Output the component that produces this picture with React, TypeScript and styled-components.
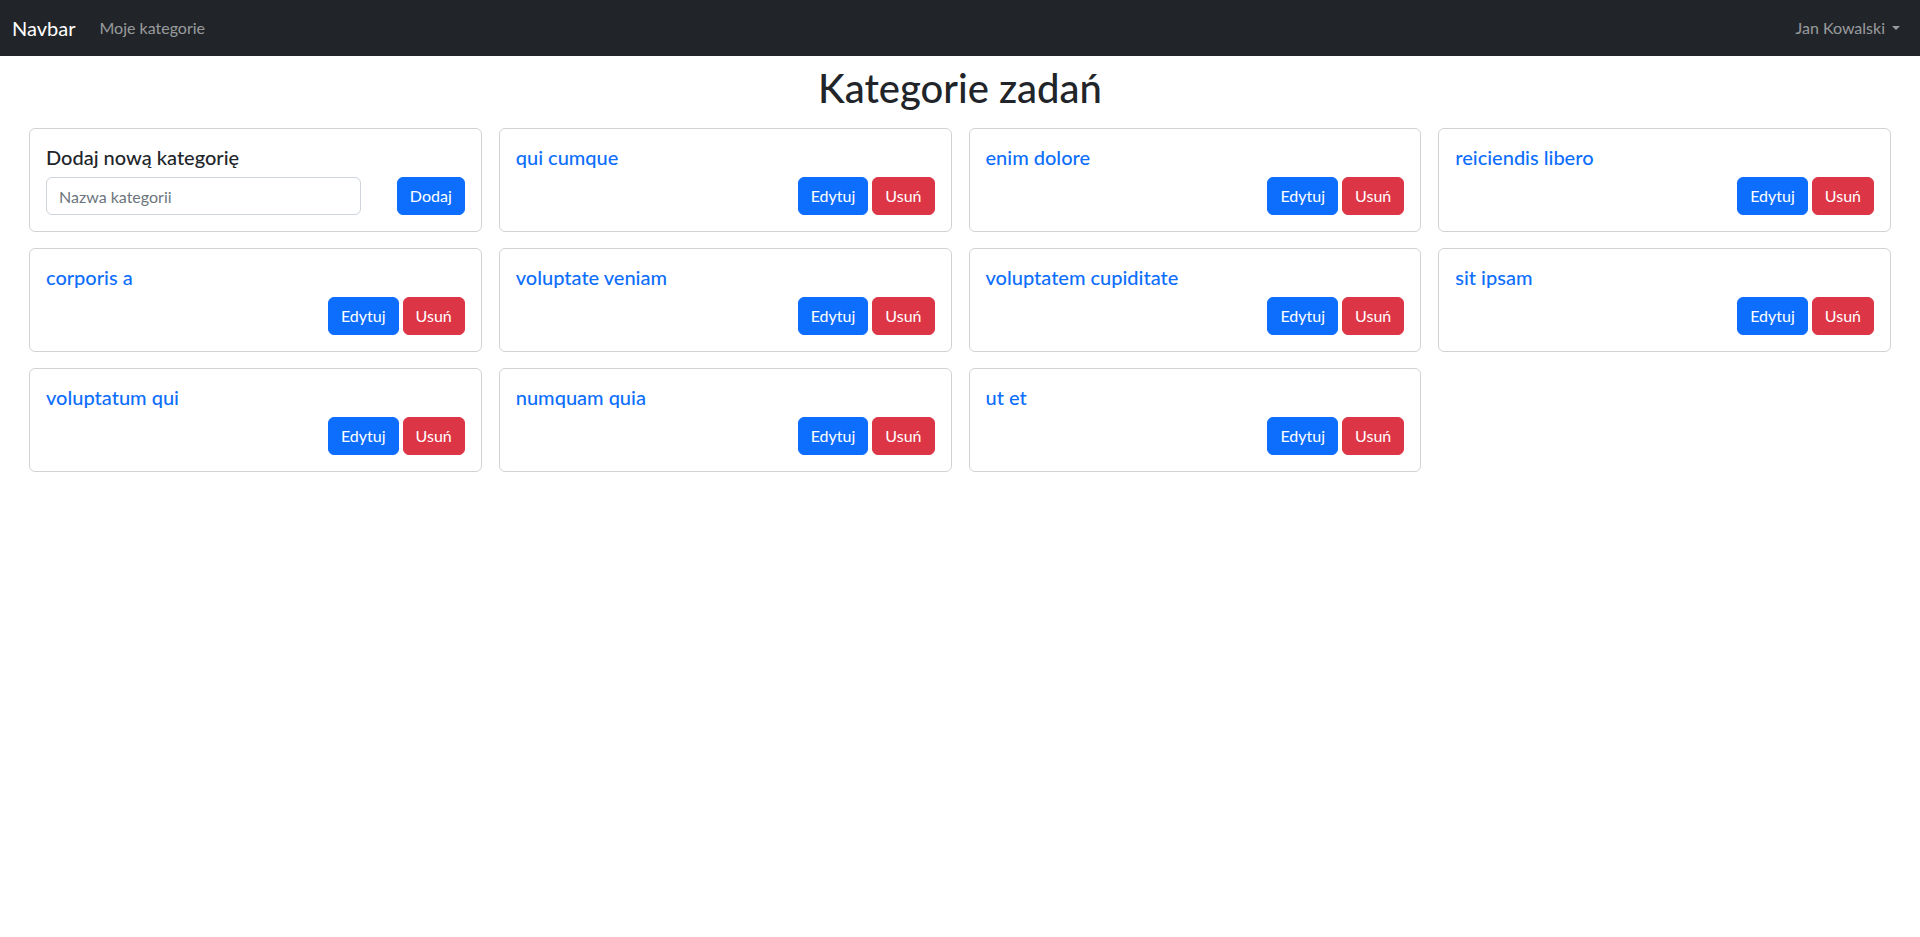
import React from "react";
import styled, { createGlobalStyle } from "styled-components";

const GlobalStyle = createGlobalStyle`
  *, *::before, *::after { box-sizing: border-box; }
  body {
    margin: 0;
    font-family: "Segoe UI", Lato, "Noto Sans", "Liberation Sans", sans-serif;
    font-size: 16px;
    line-height: 1.5;
    color: #212529;
    background: #fff;
  }
`;

const Navbar = styled.nav`
  background: #212529;
  height: 56px;
  padding: 8px 12px;
  display: flex;
  align-items: center;
  justify-content: space-between;
`;

const NavLeft = styled.div`
  display: flex;
  align-items: center;
`;

const Brand = styled.a`
  color: #fff;
  font-size: 20px;
  padding: 5px 0;
  margin-right: 16px;
  text-decoration: none;
  line-height: 30px;
`;

const NavLink = styled.a<{ $caret?: boolean }>`
  color: rgba(255, 255, 255, 0.55);
  padding: 8px;
  text-decoration: none;
  font-size: 16px;
  line-height: 24px;
  display: inline-flex;
  align-items: center;
  &::after {
    content: "";
    display: ${(p) => (p.$caret ? "inline-block" : "none")};
    margin-left: 7px;
    margin-top: -1px;
    border-top: 4.8px solid rgba(255, 255, 255, 0.55);
    border-left: 4.8px solid transparent;
    border-right: 4.8px solid transparent;
  }
`;

const Main = styled.main`
  padding: 0 29px;
`;

const Heading = styled.h1`
  margin: 8px 0 16px;
  text-align: center;
  font-size: 40px;
  font-weight: 500;
  line-height: 1.2;
`;

const Grid = styled.div`
  display: grid;
  grid-template-columns: repeat(4, 1fr);
  column-gap: 17px;
  row-gap: 16px;
`;

const Card = styled.div`
  border: 1px solid rgba(0, 0, 0, 0.175);
  border-radius: 6px;
  padding: 16px;
  display: flex;
  flex-direction: column;
`;

const CardTitle = styled.h5<{ $link?: boolean }>`
  margin: 0 0 8px;
  font-size: 20px;
  font-weight: 500;
  line-height: 1.2;
  color: ${(p) => (p.$link ? "#0d6efd" : "#212529")};
`;

const Actions = styled.div`
  display: flex;
  justify-content: flex-end;
  gap: 4px;
`;

const FormRow = styled.div`
  display: flex;
  justify-content: space-between;
  align-items: center;
`;

const Input = styled.input`
  width: 315px;
  height: 38px;
  padding: 6px 12px;
  font: inherit;
  font-size: 16px;
  color: #212529;
  border: 1px solid #ced4da;
  border-radius: 6px;
  outline: none;
  &::placeholder {
    color: #6c757d;
  }
`;

const Button = styled.button<{ $variant: "primary" | "danger" }>`
  height: 38px;
  padding: 6px 12px;
  font: inherit;
  font-size: 16px;
  line-height: 24px;
  color: #fff;
  border: 1px solid ${(p) => (p.$variant === "primary" ? "#0d6efd" : "#dc3545")};
  background: ${(p) => (p.$variant === "primary" ? "#0d6efd" : "#dc3545")};
  border-radius: 6px;
  cursor: pointer;
`;

const categories = [
  "qui cumque",
  "enim dolore",
  "reiciendis libero",
  "corporis a",
  "voluptate veniam",
  "voluptatem cupiditate",
  "sit ipsam",
  "voluptatum qui",
  "numquam quia",
  "ut et",
];

export default function App() {
  return (
    <>
      <GlobalStyle />
      <Navbar>
        <NavLeft>
          <Brand href="#">Navbar</Brand>
          <NavLink href="#">Moje kategorie</NavLink>
        </NavLeft>
        <NavLink href="#" $caret>
          Jan Kowalski
        </NavLink>
      </Navbar>
      <Main>
        <Heading>Kategorie zadań</Heading>
        <Grid>
          <Card>
            <CardTitle>Dodaj nową kategorię</CardTitle>
            <FormRow>
              <Input placeholder="Nazwa kategorii" />
              <Button $variant="primary">Dodaj</Button>
            </FormRow>
          </Card>
          {categories.map((c) => (
            <Card key={c}>
              <CardTitle $link>{c}</CardTitle>
              <Actions>
                <Button $variant="primary">Edytuj</Button>
                <Button $variant="danger">Usuń</Button>
              </Actions>
            </Card>
          ))}
        </Grid>
      </Main>
    </>
  );
}
